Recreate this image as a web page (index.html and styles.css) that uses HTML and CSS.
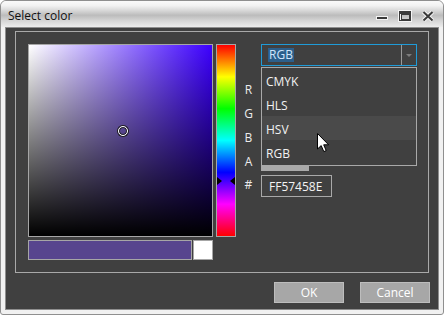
FILE: index.html
```html
<!DOCTYPE html>
<html>
<head>
<meta charset="utf-8">
<link rel="stylesheet" href="styles.css">
</head>
<body>
<div class="window">
  <div class="titlebar">
    <span class="title">Select color</span>
    <div class="caption-buttons">
      <svg class="cap-btn" width="14" height="12" viewBox="0 0 14 12"><rect x="1.5" y="6.5" width="11" height="3" fill="#3a3a3a" stroke="#f4f4f4" stroke-width="1"/></svg>
      <svg class="cap-btn" width="14" height="12" viewBox="0 0 14 12"><rect x="1.5" y="1.5" width="11" height="9" fill="none" stroke="#f4f4f4" stroke-width="3"/><rect x="1.5" y="1.5" width="11" height="9" fill="none" stroke="#3a3a3a" stroke-width="1"/><rect x="2" y="2" width="10" height="2" fill="#3a3a3a"/><rect x="3" y="4" width="8" height="5" fill="none" stroke="#3a3a3a" stroke-width="1" transform="translate(0.5 0.5)"/></svg>
      <svg class="cap-btn" width="14" height="12" viewBox="0 0 14 12"><path d="M2.5 2 L11.5 10.5 M11.5 2 L2.5 10.5" stroke="#f4f4f4" stroke-width="4"/><path d="M2.5 2 L11.5 10.5 M11.5 2 L2.5 10.5" stroke="#3a3a3a" stroke-width="2"/></svg>
    </div>
  </div>
  <div class="client">
    <div class="group">
      <div class="left-col">
        <div class="sv-area">
          <div class="sv-marker"></div>
        </div>
        <div class="preview-row">
          <div class="preview-color"></div>
          <div class="preview-old"></div>
        </div>
      </div>
      <div class="hue-bar">
        <div class="hue-tri hue-tri-left"></div>
        <div class="hue-tri hue-tri-right"></div>
      </div>
      <div class="channels">
        <div class="lbl"></div>
        <div class="combo">
          <span class="combo-text">RGB</span>
          <span class="combo-btn"><span class="combo-arrow"></span></span>
          <div class="dropdown">
            <div class="dd-item">CMYK</div>
            <div class="dd-item">HLS</div>
            <div class="dd-item dd-hover">HSV</div>
            <div class="dd-item">RGB</div>
            <svg class="cursor" width="13" height="20" viewBox="0 0 13 20"><path d="M0.5 0.5 L0.5 16 L4.2 12.6 L6.8 18.6 L9.2 17.6 L6.7 11.8 L11.6 11.8 Z" fill="#ffffff" stroke="#000000" stroke-width="1" stroke-linejoin="miter"/></svg>
          </div>
        </div>
        <div class="lbl row">R</div>
        <div class="slider row"><div class="fill" style="width:34%"></div></div>
        <div class="lbl row">G</div>
        <div class="slider row"><div class="fill" style="width:27%"></div></div>
        <div class="lbl row">B</div>
        <div class="slider row"><div class="fill" style="width:56%"></div></div>
        <div class="lbl row">A</div>
        <div class="slider row"><div class="fill" style="width:48px"></div></div>
        <div class="lbl hexrow">#</div>
        <div class="hexrow"><div class="hexbox">FF57458E</div></div>
      </div>
    </div>
    <div class="buttons">
      <div class="btn">OK</div>
      <div class="btn">Cancel</div>
    </div>
  </div>
</div>
</body>
</html>
```
FILE: styles.css
```css
html, body {
  margin: 0;
  padding: 0;
  background: #ffffff;
}
body {
  font-family: "Open Sans", "Noto Sans", sans-serif;
  font-size: 11px;
}
.window {
  width: 444px;
  height: 315px;
  box-sizing: border-box;
  border: 1px solid #8f8f8f;
  border-radius: 6px 6px 3px 3px;
  background: #f1f1f1;
  padding: 0 4px 4px 4px;
  display: flex;
  flex-direction: column;
  overflow: hidden;
}
.titlebar {
  height: 26px;
  margin: 0 -4px;
  padding: 0 8px 0 7px;
  display: flex;
  align-items: center;
  justify-content: space-between;
  background: linear-gradient(to bottom, #fafafa 0%, #f2f2f2 18%, #d6d6d6 38%, #bcbcbc 55%, #d4d4d4 75%, #ececec 100%);
  border-radius: 5px 5px 0 0;
}
.title {
  color: #111111;
  font-size: 12px;
  line-height: 16px;
  margin-top: 3px;
}
.caption-buttons {
  display: flex;
  gap: 9px;
  margin-top: 3px;
}
.cap-btn {
  display: block;
}
.client {
  flex: 1;
  border: 1px solid #8e8e8e;
  background: #404040;
  display: flex;
  flex-direction: column;
  padding: 3px 8px 6px 9px;
}
.group {
  height: 242px;
  box-sizing: border-box;
  border: 1px solid #a9a9a9;
  margin-right: 1px;
  padding: 12px 0 0 12px;
  display: flex;
  align-items: flex-start;
}
.left-col {
  width: 185px;
  display: flex;
  flex-direction: column;
  gap: 3px;
}
.sv-area {
  position: relative;
  width: 185px;
  height: 193px;
  box-sizing: border-box;
  border: 1px solid #a6a6a6;
  background:
    linear-gradient(to top, #000000, rgba(0,0,0,0)),
    linear-gradient(to right, #ffffff, #3c00ff);
}
.sv-marker {
  position: absolute;
  left: 89px;
  top: 81px;
  width: 8px;
  height: 8px;
  border: 1.5px solid #ffffff;
  border-radius: 50%;
  box-shadow: 0 0 0 1px #1c1c1c, inset 0 0 0 1px #1c1c1c;
}
.preview-row {
  display: flex;
  gap: 1px;
  height: 20px;
}
.preview-color {
  width: 164px;
  box-sizing: border-box;
  border: 1px solid #a6a6a6;
  background: #57458e;
}
.preview-old {
  width: 20px;
  box-sizing: border-box;
  border: 1px solid #a6a6a6;
  background: #ffffff;
}
.hue-bar {
  position: relative;
  margin-left: 3px;
  width: 20px;
  height: 193px;
  box-sizing: border-box;
  border: 1px solid #a6a6a6;
  background: linear-gradient(to bottom, #ff0000 0%, #ffff00 16.67%, #00ff00 33.33%, #00ffff 50%, #0000ff 66.67%, #ff00ff 83.33%, #ff0000 100%);
}
.hue-tri {
  position: absolute;
  top: 132px;
  width: 0;
  height: 0;
  border-top: 4px solid transparent;
  border-bottom: 4px solid transparent;
}
.hue-tri-left {
  left: 0;
  border-left: 5px solid #000000;
}
.hue-tri-right {
  right: 0;
  border-right: 5px solid #000000;
}
.channels {
  display: grid;
  grid-template-columns: 25px 156px;
  color: #ececec;
  font-size: 12px;
}
.lbl {
  text-align: center;
}
.row {
  height: 24px;
  line-height: 25px;
}
.combo {
  position: relative;
  height: 22px;
  box-sizing: border-box;
  border: 1px solid #1f9bd8;
  margin-bottom: 11px;
  display: flex;
  align-items: center;
  justify-content: space-between;
}
.combo-text {
  margin-left: 6px;
  padding: 0 1px;
  background: #2c5f8b;
  color: #cfe6fb;
  line-height: 14px;
}
.combo-btn {
  width: 15px;
  height: 100%;
  box-sizing: border-box;
  border-left: 1px solid #9a9a9a;
  display: flex;
  align-items: center;
  justify-content: center;
}
.combo-arrow {
  width: 0;
  height: 0;
  border-left: 3px solid transparent;
  border-right: 3px solid transparent;
  border-top: 3px solid #7d7d7d;
}
.dropdown {
  position: absolute;
  left: -1px;
  top: 22px;
  width: 156px;
  height: 99px;
  box-sizing: border-box;
  border: 1px solid #a9a9a9;
  background: #404040;
  z-index: 5;
}
.dd-item {
  height: 24px;
  line-height: 28px;
  padding-left: 4px;
  color: #f2f2f2;
}
.dd-hover {
  background: #4a4a4a;
}
.cursor {
  position: absolute;
  left: 55px;
  top: 65px;
}
.slider {
  display: flex;
  flex-direction: column;
  justify-content: flex-end;
}
.fill {
  height: 6px;
  margin-bottom: 2px;
  background: #a9a9a9;
}
.hexrow {
  margin-top: 2px;
  height: 22px;
  line-height: 20px;
}
.hexbox {
  width: 71px;
  height: 22px;
  box-sizing: border-box;
  border: 1px solid #a9a9a9;
  padding-left: 7px;
  line-height: 21px;
  color: #f4f4f4;
}
.buttons {
  display: flex;
  justify-content: flex-end;
  gap: 16px;
  margin-top: 9px;
}
.btn {
  width: 70px;
  height: 21px;
  box-sizing: border-box;
  border: 1px solid #bdbdbd;
  background: #a7a7a7;
  color: #ffffff;
  font-size: 12px;
  line-height: 19px;
  text-align: center;
}
```
